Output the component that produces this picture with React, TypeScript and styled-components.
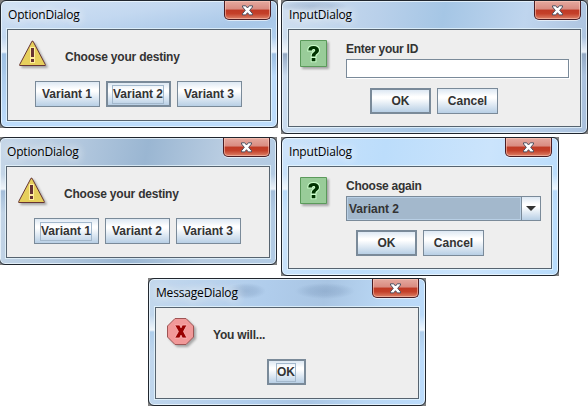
import React from "react";
import styled, { createGlobalStyle, css } from "styled-components";

const Global = createGlobalStyle`
  html, body { margin: 0; background: #fff; overflow: hidden; }
  *, *::before, *::after { box-sizing: border-box; }
`;

const Desktop = styled.main`
  position: relative;
  width: 588px;
  height: 407px;
  overflow: hidden;
  background: #fff;
`;

/* Square backing corner that shows behind the rounded frame. */
const Backing = styled.div<{ $x: number; $y: number; $w: number; $h: number }>`
  position: absolute;
  left: ${(p) => p.$x}px;
  top: ${(p) => p.$y}px;
  width: ${(p) => p.$w}px;
  height: ${(p) => p.$h}px;
  background: #808080;
`;

const Frame = styled.section<{ $glass: string }>`
  width: 100%;
  height: 100%;
  display: flex;
  flex-direction: column;
  padding: 0 6px 6px;
  border: 1px solid #20262e;
  border-radius: 6px;
  background: ${(p) => p.$glass};
  box-shadow: inset 0 0 0 1px rgba(240, 250, 255, 0.75);
`;

const TitleBar = styled.header`
  flex: 0 0 28px;
  display: flex;
  justify-content: space-between;
  align-items: flex-start;
`;

const Title = styled.h1`
  margin: 0;
  padding: 6px 0 0 1px;
  font: 400 12px/16px "Open Sans", "Noto Sans", sans-serif;
  letter-spacing: -0.18px;
  color: #000;
  text-shadow: 0 0 8px #fff, 0 0 12px rgba(255, 255, 255, 0.8);
`;

const CloseButton = styled.button`
  width: 47px;
  height: 19px;
  margin: 0;
  padding: 0;
  display: flex;
  justify-content: center;
  align-items: center;
  border: 1px solid #4a1d24;
  border-top: 0;
  border-radius: 0 0 5px 5px;
  background: linear-gradient(#e5a99f 0, #d98b80 45%, #bf3a25 50%, #c44029 70%, #dc8168 100%);
  box-shadow: inset 0 0 0 1px rgba(255, 205, 190, 0.55), 0 1px 0 rgba(255, 255, 255, 0.6);
`;

const Pane = styled.div`
  flex: 1;
  min-height: 0;
  display: flex;
  flex-direction: column;
  border: 1px solid #56636f;
  background: #eee;
  box-shadow: 0 0 0 1px rgba(235, 250, 255, 0.7);
`;

const MessageRow = styled.div<{ $height: number }>`
  display: flex;
  flex: 0 0 ${(p) => p.$height}px;
  padding: 10px 11px 0;
`;

const swing = css`
  font: 700 12px/14px "Liberation Sans", Arial, sans-serif;
  color: #333;
`;

const Message = styled.p`
  ${swing}
  margin: 10px 0 0 19px;
  letter-spacing: -0.21px;
  white-space: nowrap;
`;

const Field = styled.label<{ $overhang?: number }>`
  ${swing}
  flex: 1;
  display: flex;
  flex-direction: column;
  margin: 2px ${(p) => -(p.$overhang ?? 0)}px 0 19px;
  letter-spacing: -0.25px;
`;

const TextInput = styled.input`
  width: 100%;
  height: 19px;
  margin-top: 3px;
  padding: 0 3px;
  border: 1px solid #7a8a99;
  background: #fff;
  box-shadow: 1px 1px 0 #fff;
  outline: none;
`;

const Combo = styled.div`
  display: flex;
  height: 25px;
  margin-top: 3px;
  border: 1px solid #7a8a99;
  background: #a3b8cc;
`;

const ComboValue = styled.span`
  flex: 1;
  padding: 4px 1px;
  border: 1px solid #b8cfe5;
  letter-spacing: 0;
`;

const ComboArrow = styled.span`
  width: 19px;
  display: flex;
  align-items: center;
  justify-content: center;
  border-left: 1px solid #7a8a99;
  background: linear-gradient(#dde8f3 0, #fff 32%, #fff 42%, #b8cfe5 100%);
`;

const Buttons = styled.div<{ $shift?: number }>`
  display: flex;
  justify-content: center;
  gap: 6px;
  padding-right: ${(p) => p.$shift ?? 0}px;
`;

const Button = styled.button<{ $w: number; $primary?: boolean }>`
  ${swing}
  width: ${(p) => p.$w}px;
  height: 26px;
  margin: 0;
  padding: 0;
  display: flex;
  align-items: center;
  justify-content: center;
  border: ${(p) => (p.$primary ? 2 : 1)}px solid #7a8a99;
  border-radius: 0;
  background: linear-gradient(#dde8f3 0, #fff 30%, #fff 38%, #b8cfe5 100%);
  white-space: nowrap;
`;

const Label = styled.span<{ $focused?: boolean }>`
  padding: 1px 0;
  border: 1px solid ${(p) => (p.$focused ? "#a3b8cc" : "transparent")};
  line-height: 15px;
`;

const IconSvg = styled.svg`
  flex: none;
  display: block;
  overflow: visible;
  filter: drop-shadow(2px 2px 1px rgba(0, 0, 0, 0.3));
`;

const CloseIcon = () => (
  <svg width="13" height="11" viewBox="0 0 13 11">
    <path
      d="M1.5 .8H4.7L6.5 3 8.3 .8H11.5V2L8.7 5.3 11.5 8.7V9.9H8.3L6.5 7.7 4.7 9.9H1.5V8.7L4.3 5.3 1.5 2Z"
      fill="#fff"
      stroke="#4d5060"
      strokeWidth="1"
    />
  </svg>
);

const WarningIcon = () => (
  <IconSvg width="27" height="27" viewBox="0 0 27 27">
    <path d="M13 1.2H14L26.3 24.5V25.5H.7V24.5Z" fill="#e6cf5c" stroke="#663333" />
    <path d="M11 7h5v11h-5zM11 18h5v5h-5z" fill="#ffed9c" />
    <path d="M12 8h3v9h-3zM12 19h3v3h-3z" fill="#663333" />
  </IconSvg>
);

/* The mark is one outline shape, drawn with a pale halo around it. */
const QuestionIcon = () => (
  <IconSvg width="27" height="27" viewBox="0 0 27 27">
    <path d="M.5 .5h26v26H.5z" fill="#99cc99" stroke="#5b9a5b" />
    <path
      d="M8.3 10.5C8.3 7.6 10.3 6.1 13.6 6.1S19 7.7 19 10.3C19 12.4 17.8 13.2 16.6 14.1C15.7 14.8 15.4 15.2 15.4 16.6H11.7C11.7 14.3 12.3 13.4 13.6 12.4C14.6 11.7 15.2 11.3 15.2 10.3C15.2 9.4 14.6 8.9 13.6 8.9S12 9.5 12 10.5ZM11.7 18H15.4V21.2H11.7Z"
      fill="#003300"
      stroke="#ccffcc"
      strokeWidth="2"
      paintOrder="stroke"
    />
  </IconSvg>
);

const ErrorIcon = () => (
  <IconSvg width="27" height="27" viewBox="0 0 27 27">
    <path d="M8 .5H19L26.5 8V19L19 26.5H8L.5 19V8Z" fill="#f19999" stroke="#9e5454" />
    <path
      d="M7.7 7H12.7L14 9.8 15.3 7H20L16.5 13.5 20 20H15.3L14 17.2 12.7 20H7.7L11.4 13.5Z"
      fill="#990000"
      stroke="#ffb9b9"
      strokeWidth=".8"
    />
  </IconSvg>
);

type WindowProps = {
  title: string;
  x: number;
  y: number;
  w: number;
  h: number;
  glass: string;
  children: React.ReactNode;
};

const Window = ({ title, x, y, w, h, glass, children }: WindowProps) => (
  <Backing $x={x} $y={y} $w={w} $h={h}>
    <Frame $glass={glass}>
      <TitleBar>
        <Title>{title}</Title>
        <CloseButton aria-label="Close">
          <CloseIcon />
        </CloseButton>
      </TitleBar>
      <Pane>{children}</Pane>
    </Frame>
  </Backing>
);

const side = (mid: string) =>
  `linear-gradient(transparent 36px, rgba(255,255,255,.75) 51px, ${mid} 53px, transparent 75px)`;

/* Soft dark spot seen through the translucent title bar. */
const smudge = (x: number, y: number, rx: number, ry: number) =>
  `radial-gradient(${rx}px ${ry}px at ${x}px ${y}px, rgba(80,110,150,.24), rgba(80,110,150,.16) 55%, transparent)`;

const glass = {
  first: `${side("#9dc0e4")}, linear-gradient(170deg, #d2e2f4 0, #c3d8f0 20%, #a9c8e8 38%, #bddcfb 70%, #bddcfb 100%)`,
  second: `${smudge(30, 5, 36, 6)}, ${side("#93a9c4")}, linear-gradient(100deg, #cfdff0 0, #b9d0ea 30%, #a5c6e5 50%, #bfd5ee 75%, #a9c0dc 100%)`,
  third: `${side("#a3bdd9")}, linear-gradient(100deg, #c6d7e8 0, #b4c9df 25%, #9ab6d2 50%, #b8cce1 75%, #b2cbe4 100%)`,
  fourth: `${side("#b8dafa")}, linear-gradient(100deg, #cbe3fa 0, #bcddfb 35%, #cbe4fc 70%, #b8dcfc 100%)`,
  fifth: `${smudge(97, 12, 20, 8)}, ${smudge(176, 12, 30, 8)}, ${side("#aecdeb")}, linear-gradient(100deg, #c3d8ed 0, #b0cdec 40%, #a9c5e3 60%, #b9d7f4 80%, #bcdcfc 100%)`,
};

const OptionBody = ({ primary, focused }: { primary?: number; focused: number }) => (
  <>
    <MessageRow $height={51}>
      <WarningIcon />
      <Message>Choose your destiny</Message>
    </MessageRow>
    <Buttons $shift={2}>
      {[1, 2, 3].map((n) => (
        <Button key={n} $w={65} $primary={primary === n}>
          <Label $focused={focused === n}>Variant {n}</Label>
        </Button>
      ))}
    </Buttons>
  </>
);

const Confirm = ({ shift }: { shift?: number }) => (
  <Buttons $shift={shift}>
    <Button $w={61} $primary>
      <Label>OK</Label>
    </Button>
    <Button $w={61}>
      <Label>Cancel</Label>
    </Button>
  </Buttons>
);

export default function App() {
  return (
    <>
      <Global />
      <Desktop>
        <Window title="OptionDialog" x={0} y={0} w={278} h={128} glass={glass.first}>
          <OptionBody primary={2} focused={2} />
        </Window>
        <Window title="InputDialog" x={281} y={0} w={307} h={134} glass={glass.second}>
          <MessageRow $height={58}>
            <QuestionIcon />
            <Field>
              Enter your ID
              <TextInput />
            </Field>
          </MessageRow>
          <Confirm shift={1} />
        </Window>
        <Window title="OptionDialog" x={-1} y={137} w={278} h={128} glass={glass.third}>
          <OptionBody focused={1} />
        </Window>
        <Window title="InputDialog" x={281} y={137} w={278} h={139} glass={glass.fourth}>
          <MessageRow $height={63}>
            <QuestionIcon />
            <Field $overhang={1}>
              Choose again
              <Combo>
                <ComboValue>Variant 2</ComboValue>
                <ComboArrow>
                  <svg width="10" height="5" viewBox="0 0 10 5">
                    <path d="M0 0H10L5 5Z" fill="#333" />
                  </svg>
                </ComboArrow>
              </Combo>
            </Field>
          </MessageRow>
          <Confirm />
        </Window>
        <Window title="MessageDialog" x={148} y={278} w={278} h={128} glass={glass.fifth}>
          <MessageRow $height={51}>
            <ErrorIcon />
            <Message>You will...</Message>
          </MessageRow>
          <Buttons $shift={2}>
            <Button $w={39} $primary>
              <Label $focused>OK</Label>
            </Button>
          </Buttons>
        </Window>
      </Desktop>
    </>
  );
}
